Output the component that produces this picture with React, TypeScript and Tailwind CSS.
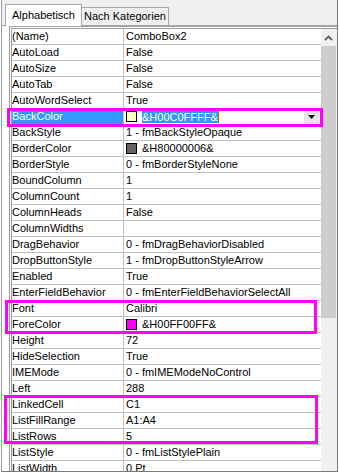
import React from "react";

type Row = {
  name: string;
  value: string;
  swatch?: string;
  selected?: boolean;
};

const rows: Row[] = [
  { name: "(Name)", value: "ComboBox2" },
  { name: "AutoLoad", value: "False" },
  { name: "AutoSize", value: "False" },
  { name: "AutoTab", value: "False" },
  { name: "AutoWordSelect", value: "True" },
  { name: "BackColor", value: "&H00C0FFFF&", swatch: "bg-[#ffffc0]", selected: true },
  { name: "BackStyle", value: "1 - fmBackStyleOpaque" },
  { name: "BorderColor", value: "&H80000006&", swatch: "bg-[#646464]" },
  { name: "BorderStyle", value: "0 - fmBorderStyleNone" },
  { name: "BoundColumn", value: "1" },
  { name: "ColumnCount", value: "1" },
  { name: "ColumnHeads", value: "False" },
  { name: "ColumnWidths", value: "" },
  { name: "DragBehavior", value: "0 - fmDragBehaviorDisabled" },
  { name: "DropButtonStyle", value: "1 - fmDropButtonStyleArrow" },
  { name: "Enabled", value: "True" },
  { name: "EnterFieldBehavior", value: "0 - fmEnterFieldBehaviorSelectAll" },
  { name: "Font", value: "Calibri" },
  { name: "ForeColor", value: "&H00FF00FF&", swatch: "bg-[#ff00ff]" },
  { name: "Height", value: "72" },
  { name: "HideSelection", value: "True" },
  { name: "IMEMode", value: "0 - fmIMEModeNoControl" },
  { name: "Left", value: "288" },
  { name: "LinkedCell", value: "C1" },
  { name: "ListFillRange", value: "A1:A4" },
  { name: "ListRows", value: "5" },
  { name: "ListStyle", value: "0 - fmListStylePlain" },
  { name: "ListWidth", value: "0 Pt" },
];

function PropRow({ row }: { row: Row }) {
  return (
    <div className="flex h-[16px] shrink-0 border-b border-[#c0c0c0]">
      <div
        className={
          row.selected
            ? "w-[112px] shrink-0 border-r border-[#c0c0c0] bg-[#3399ff] text-white leading-[15px] whitespace-nowrap overflow-hidden"
            : "w-[112px] shrink-0 border-r border-[#c0c0c0] text-black leading-[15px] whitespace-nowrap overflow-hidden"
        }
      >
        {row.name}
      </div>
      <div className="flex-1 flex items-center pl-[2px] whitespace-nowrap overflow-hidden text-black">
        {row.swatch && (
          <div className={`w-[11px] h-[11px] shrink-0 border border-black mr-[5px] ${row.swatch}`} />
        )}
        {row.selected ? (
          <>
            <span className="bg-[#3399ff] text-white h-[12px] leading-[12px]">{row.value}</span>
            <span className="w-[1px] h-[12px] bg-[#c86400]" />
            <div className="flex-1" />
            <div className="self-start mt-[1px] mr-[2px] w-[15px] h-[14px] bg-[#e5e5e5] flex items-center justify-center">
              <svg width="7" height="4" viewBox="0 0 7 4">
                <path d="M0 0 H7 L3.5 4 Z" fill="#000" />
              </svg>
            </div>
          </>
        ) : (
          <span className="leading-[15px]">{row.value}</span>
        )}
      </div>
    </div>
  );
}

export default function App() {
  return (
    <div className="relative w-[339px] h-[473px] bg-white overflow-hidden pl-[1px] font-['Liberation_Sans',Arial,sans-serif] text-[11px]">
      <div className="w-[337px] h-[472px] flex flex-col bg-[#f0f0f0] border-l border-l-[#a0a0a0] border-r border-r-[#7a7a7a] border-b border-b-[#7a7a7a]">
        {/* Tab strip */}
        <div className="h-[26px] shrink-0 flex items-end">
          <div className="w-[3px] h-[1px] bg-[#a8a8a8]" />
          <div className="w-[77px] h-[22px] bg-white border-t border-l border-r border-[#a8a8a8] flex items-center justify-center pb-[1px] text-black">
            Alphabetisch
          </div>
          <div className="w-[87px] h-[19px] bg-[#f0f0f0] border-t border-r border-b border-[#a8a8a8] flex items-center justify-center text-black">
            Nach Kategorien
          </div>
          <div className="flex-1 h-[1px] bg-[#a8a8a8]" />
        </div>
        {/* Panel */}
        <div className="flex-1 flex bg-white pl-[7px] min-h-0">
          <div className="flex-1 flex min-h-0 border-t-[3px] border-l-[3px] border-double border-[#a0a0a0]">
            <div className="flex-1 flex flex-col overflow-hidden">
              {rows.map((r) => (
                <PropRow key={r.name} row={r} />
              ))}
            </div>
            {/* Scrollbar */}
            <div className="w-[16px] shrink-0 flex flex-col bg-[#f0f0f0]">
              <div className="h-[17px] flex items-center justify-center pr-[1px]">
                <svg width="9" height="6" viewBox="0 0 9 6">
                  <path d="M1 5 L4.5 1.5 L8 5" stroke="#606060" strokeWidth="1.8" fill="none" />
                </svg>
              </div>
              <div className="h-[272px] w-[15px] bg-[#cdcdcd]" />
              <div className="flex-1" />
            </div>
          </div>
        </div>
      </div>
      {/* Annotation boxes */}
      <div className="absolute left-[7px] top-[108px] w-[316px] h-[19px] border-[3px] border-[#ff00ff] pointer-events-none" />
      <div className="absolute left-[5px] top-[300px] w-[312px] h-[34px] border-[3px] border-[#ff00ff] pointer-events-none" />
      <div className="absolute left-[4px] top-[395px] w-[314px] h-[49px] border-[3px] border-[#ff00ff] pointer-events-none" />
    </div>
  );
}
